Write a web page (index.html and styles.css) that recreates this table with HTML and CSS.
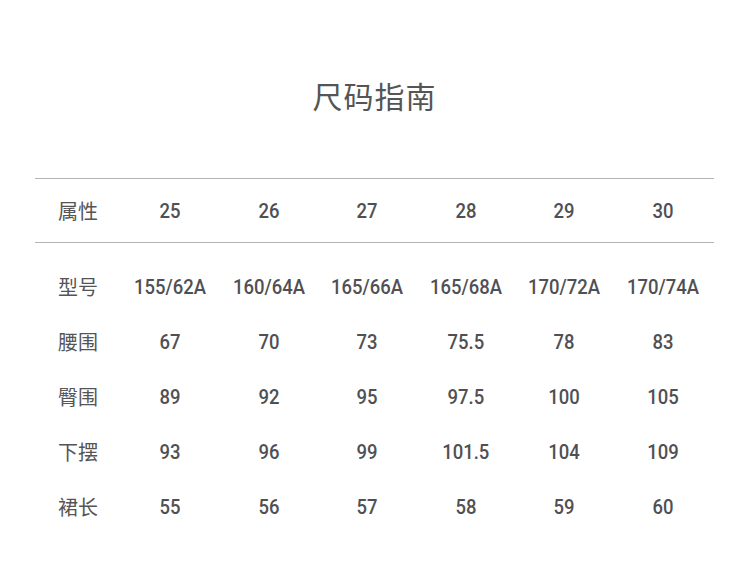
FILE: index.html
```html
<!DOCTYPE html>
<html lang="zh">
<head>
<meta charset="utf-8">
<link rel="stylesheet" href="styles.css">
</head>
<body>
<div class="page">
  <h1 class="title">尺码指南</h1>
  <div class="table">
    <div class="row head">
      <div class="label">属性</div>
      <div class="cell"><span>25</span></div><div class="cell"><span>26</span></div><div class="cell"><span>27</span></div><div class="cell"><span>28</span></div><div class="cell"><span>29</span></div><div class="cell"><span>30</span></div>
    </div>
    <div class="body">
      <div class="row">
        <div class="label">型号</div>
        <div class="cell"><span>155/62A</span></div><div class="cell"><span>160/64A</span></div><div class="cell"><span>165/66A</span></div><div class="cell"><span>165/68A</span></div><div class="cell"><span>170/72A</span></div><div class="cell"><span>170/74A</span></div>
      </div>
      <div class="row">
        <div class="label">腰围</div>
        <div class="cell"><span>67</span></div><div class="cell"><span>70</span></div><div class="cell"><span>73</span></div><div class="cell"><span>75.5</span></div><div class="cell"><span>78</span></div><div class="cell"><span>83</span></div>
      </div>
      <div class="row">
        <div class="label">臀围</div>
        <div class="cell"><span>89</span></div><div class="cell"><span>92</span></div><div class="cell"><span>95</span></div><div class="cell"><span>97.5</span></div><div class="cell"><span>100</span></div><div class="cell"><span>105</span></div>
      </div>
      <div class="row">
        <div class="label">下摆</div>
        <div class="cell"><span>93</span></div><div class="cell"><span>96</span></div><div class="cell"><span>99</span></div><div class="cell"><span>101.5</span></div><div class="cell"><span>104</span></div><div class="cell"><span>109</span></div>
      </div>
      <div class="row">
        <div class="label">裙长</div>
        <div class="cell"><span>55</span></div><div class="cell"><span>56</span></div><div class="cell"><span>57</span></div><div class="cell"><span>58</span></div><div class="cell"><span>59</span></div><div class="cell"><span>60</span></div>
      </div>
    </div>
  </div>
</div>
</body>
</html>
```

FILE: styles.css
```css
html, body {
  margin: 0;
  padding: 0;
  background: #ffffff;
}
.page {
  width: 750px;
  height: 566px;
  padding: 0 36px 0 35px;
  box-sizing: border-box;
  font-family: Roboto, "Noto Sans CJK SC", sans-serif;
  color: #505050;
}
.title {
  margin: 0;
  height: 178px;
  padding-top: 75px;
  box-sizing: border-box;
  text-align: center;
  font-family: "Noto Sans CJK SC", sans-serif;
  font-weight: 400;
  font-size: 30px;
  line-height: 40px;
  color: #555555;
  letter-spacing: 1px;
}
.table {
  width: 679px;
}
.row {
  display: grid;
  grid-template-columns: 86px repeat(6, 1fr);
  align-items: center;
  height: 55px;
  padding-right: 2px;
}
.row.head {
  height: 63px;
  border-top: 1px solid #b4b4b4;
  border-bottom: 1px solid #b4b4b4;
}
.body {
  padding-top: 16px;
}
.label {
  padding-left: 23px;
  font-family: "Noto Sans CJK SC", sans-serif;
  font-size: 20px;
  color: #555555;
}
.cell {
  text-align: center;
  font-size: 21px;
  font-weight: 500;
  color: #505054;
  line-height: 24px;
}
.cell span {
  display: inline-block;
  transform: scaleX(0.88);
}
```
